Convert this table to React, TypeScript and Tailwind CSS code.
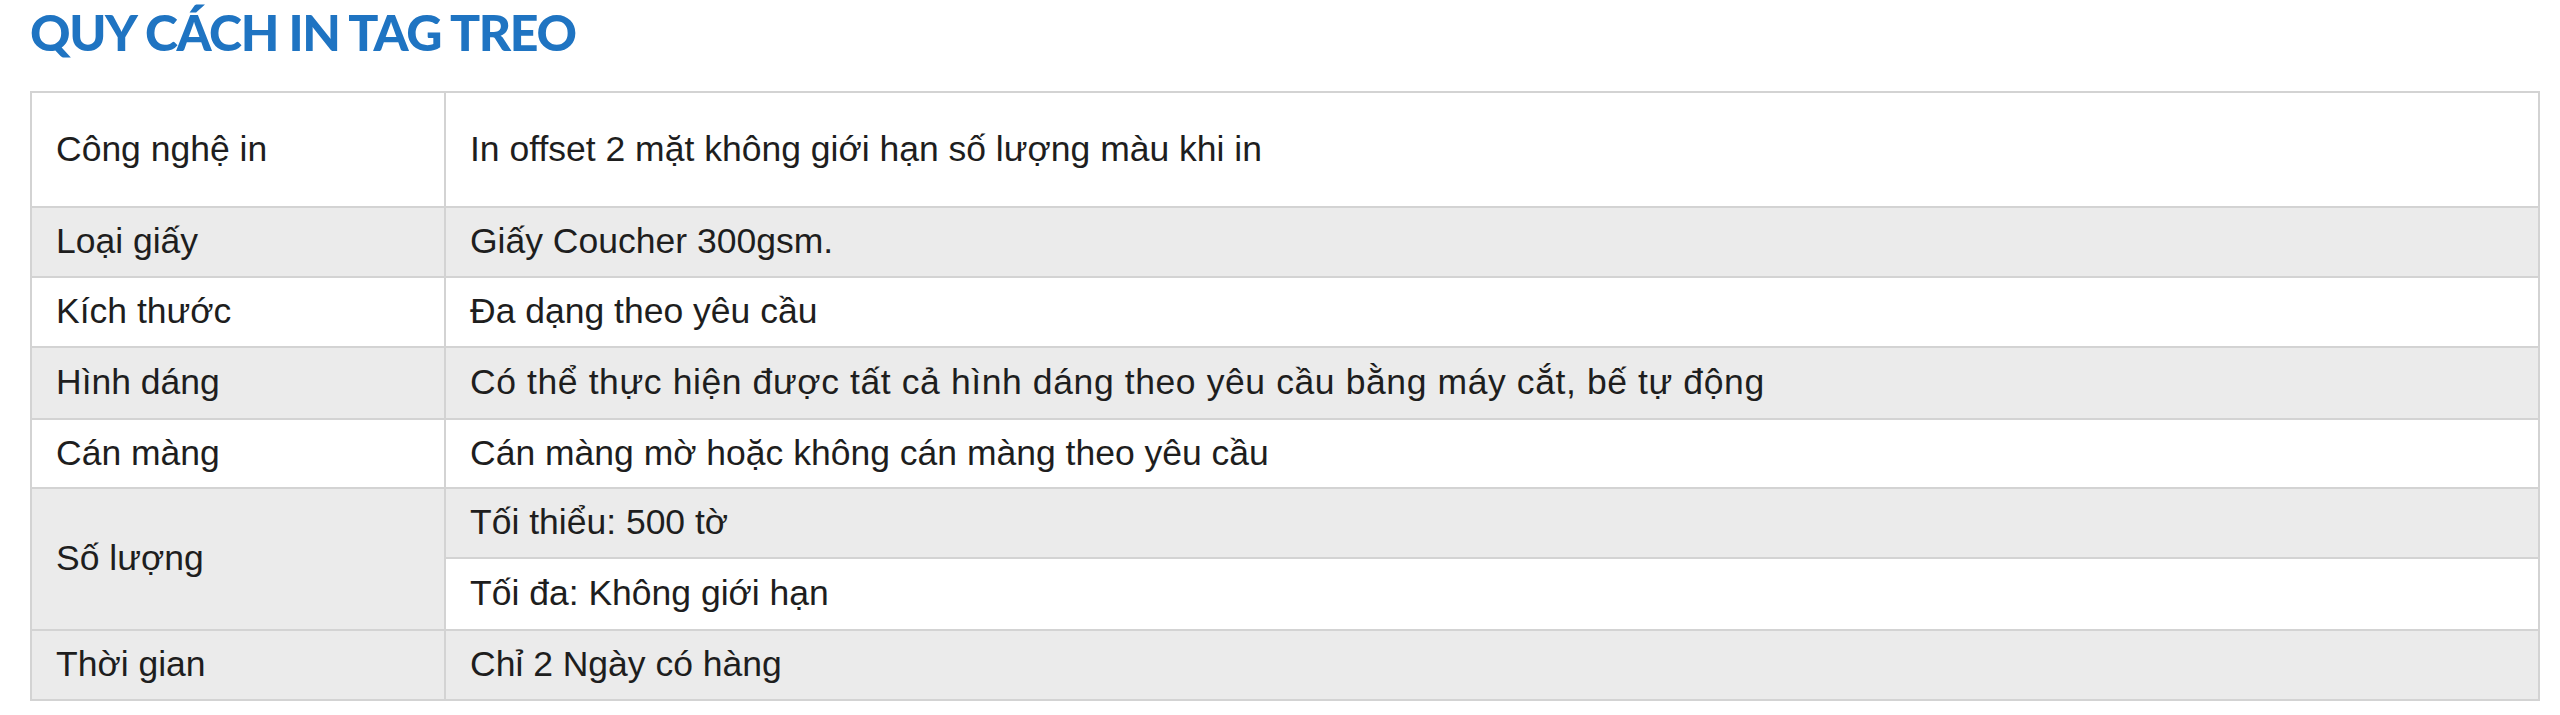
import React from "react";

const cell = "border-2 border-[#d3d3d3] px-[24px] align-middle";

export default function App() {
  return (
    <div className="w-[2560px] h-[715px] bg-white pl-[30px] pr-[20px] pt-[7px]">
      <h1
        className="text-[50px] leading-[50px] font-black text-[#1f74c2] tracking-[-1.4px]"
        style={{ fontFamily: "Lato, 'Open Sans', sans-serif" }}
      >
        QUY CÁCH IN TAG TREO
      </h1>
      <table
        className="mt-[34px] w-full border-collapse text-[35.5px] text-[#1e1e1e]"
        style={{ fontFamily: "'Liberation Sans', Arial, sans-serif" }}
      >
        <colgroup>
          <col className="w-[414px]" />
          <col />
        </colgroup>
        <tbody>
          <tr className="bg-white h-[115px]">
            <td className={cell}>Công nghệ in</td>
            <td className={cell}>In offset 2 mặt không giới hạn số lượng màu khi in</td>
          </tr>
          <tr className="bg-[#ebebeb] h-[70px]">
            <td className={cell}>Loại giấy</td>
            <td className={cell}>Giấy Coucher 300gsm.</td>
          </tr>
          <tr className="bg-white h-[70px]">
            <td className={cell}>Kích thước</td>
            <td className={cell}>Đa dạng theo yêu cầu</td>
          </tr>
          <tr className="bg-[#ebebeb] h-[72px]">
            <td className={cell}>Hình dáng</td>
            <td className={`${cell} tracking-[0.6px]`}>
              Có thể thực hiện được tất cả hình dáng theo yêu cầu bằng máy cắt, bế tự động
            </td>
          </tr>
          <tr className="bg-white h-[69px]">
            <td className={cell}>Cán màng</td>
            <td className={cell}>Cán màng mờ hoặc không cán màng theo yêu cầu</td>
          </tr>
          <tr className="bg-[#ebebeb] h-[70px]">
            <td className={cell} rowSpan={2}>Số lượng</td>
            <td className={cell}>Tối thiểu: 500 tờ</td>
          </tr>
          <tr className="h-[72px]">
            <td className={`${cell} bg-white`}>Tối đa: Không giới hạn</td>
          </tr>
          <tr className="bg-[#ebebeb] h-[70px]">
            <td className={cell}>Thời gian</td>
            <td className={cell}>Chỉ 2 Ngày có hàng</td>
          </tr>
        </tbody>
      </table>
    </div>
  );
}
